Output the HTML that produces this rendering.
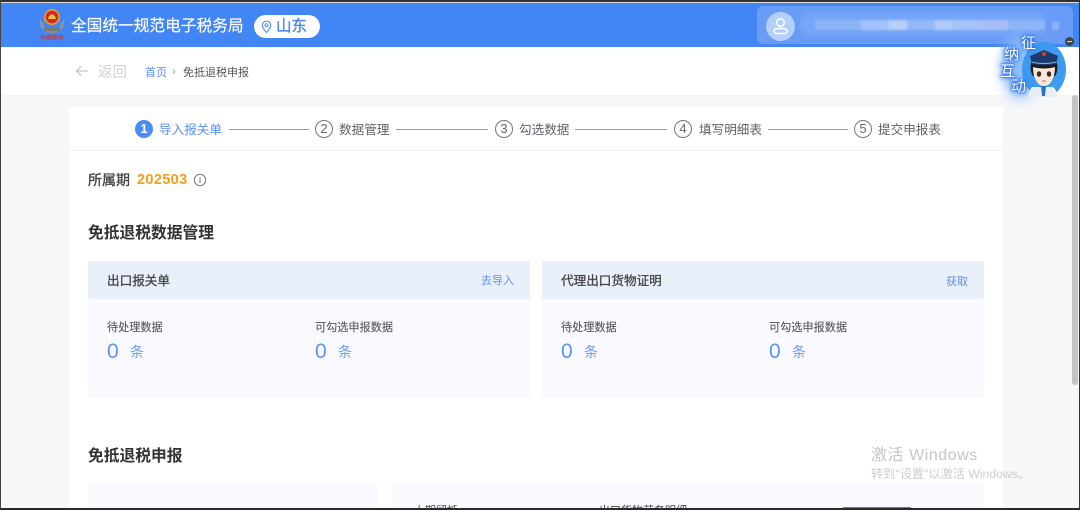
<!DOCTYPE html>
<html lang="zh-CN"><head><meta charset="utf-8"><title>免抵退税申报</title>
<style>
*{box-sizing:border-box;margin:0;padding:0}
html,body{width:1080px;height:510px;overflow:hidden;background:#f6f7f9}
body{position:relative;font-family:"Liberation Sans","Noto Sans CJK SC",sans-serif;color:#333;filter:blur(.35px)}
.a{position:absolute;white-space:nowrap;line-height:1}
.panel{position:absolute;background:#f8faff}
.ph{position:absolute;left:0;top:0;right:0;height:38px;background:#e9f0fb}
.line{position:absolute;top:129px;height:1px;background:#9a9a9a}
.num{position:absolute;top:120px;width:18px;height:18px;border:1px solid #777;border-radius:50%;color:#666;font-size:13px;line-height:16px;text-align:center}
.step{position:absolute;top:123px;font-size:12.6px;line-height:15px;color:#606266;white-space:nowrap}
.blue{color:#5b8ff5}
.lbl{font-size:11.15px;color:#555;-webkit-text-stroke:.1px #555}
.zero{font-size:21px;color:#5f93f6}
.tiao{font-size:14px;color:#6f9cf2}
.ptitle{font-size:12.6px;color:#444;line-height:16px;-webkit-text-stroke:.3px #444}
.m{font-size:15px;color:#fff;line-height:16px;text-shadow:0 0 1px #1f66e6,0 0 2px #1f66e6,0 0 3px #2f74ea,0 0 4px #2f74ea,0 0 6px #4a8cf5}
</style></head><body>
<!-- header -->
<div class="a" style="left:0;top:3px;width:1080px;height:44px;background:#4285f4"></div>
<svg class="a" style="left:38px;top:8px" width="28" height="36" viewBox="0 0 28 36">
<path d="M2 11c0 8 4 14 12 14s12-6 12-14l-3 9-9 3-9-3z" fill="#a5a7a2"/>
<path d="M4 14c1 6 4 10 10 10s9-4 10-10" fill="none" stroke="#8d908c" stroke-width="2"/>
<circle cx="14" cy="9" r="8" fill="#e0a22b"/><circle cx="14" cy="9" r="6.300" fill="#d5242b"/>
<path d="M10 11h8l-1-3-3-2-3 2z" fill="#f0c23a"/>
<rect x="6" y="19" width="16" height="4" rx="1" fill="#777a76"/>
<text x="14" y="31.500" font-size="5.500" text-anchor="middle" fill="#d5322e" font-family="Noto Sans CJK SC,sans-serif" font-weight="700" letter-spacing=".4">中国税务</text>
</svg>
<div class="a" style="left:71px;top:18px;font-size:15.7px;color:#fff;line-height:18px;-webkit-text-stroke:.15px #fff">全国统一规范电子税务局</div>
<div class="a" style="left:254px;top:15px;width:66px;height:23px;background:#fff;border-radius:12px"></div>
<svg class="a" style="left:261px;top:20px" width="11" height="14" viewBox="0 0 11 14"><path d="M5.500 1.200C3 1.200 1.300 3 1.300 5.300c0 2.800 4.200 7.200 4.200 7.200s4.200-4.400 4.200-7.200c0-2.300-1.700-4.100-4.200-4.100z" fill="none" stroke="#5b8ff5" stroke-width="1.200"/><circle cx="5.500" cy="5.300" r="1.500" fill="none" stroke="#5b8ff5"/></svg>
<div class="a" style="left:276px;top:18px;font-size:15.5px;color:#4a86f0;line-height:17px;-webkit-text-stroke:.35px #4a86f0">山东</div>
<!-- user box -->
<div class="a" style="left:757px;top:6px;width:316px;height:38px;background:#689cf7;border-radius:6px"></div>
<div class="a" style="left:766px;top:12px;width:29px;height:29px;border-radius:50%;background:#b3d0fb"></div>
<svg class="a" style="left:772px;top:17px" width="17" height="18" viewBox="0 0 17 18"><circle cx="8.500" cy="5.500" r="3.800" fill="none" stroke="#fff" stroke-width="1.500"/><rect x="2" y="11.500" width="13" height="5" rx="2.500" fill="none" stroke="#fff" stroke-width="1.500"/></svg>
<div class="a" style="left:800px;top:13px;width:245px;height:22px;background:#77a6f8;border-radius:9px;filter:blur(3px)"></div>
<div class="a" style="left:815px;top:20px;width:230px;height:10px;filter:blur(1px);background:linear-gradient(90deg,#8db4f8 0 20%,#a3c1fa 20% 32%,#b8cffa 32% 40%,#94b8f8 40% 52%,#b0caf9 52% 60%,#a6c3fa 60% 72%,#a9bef9 72% 84%,#8fb5f8 84%)"></div>
<div class="a" style="left:1052px;top:22px;width:7px;height:8px;background:#8fb5f8;filter:blur(1px)"></div>
<!-- breadcrumb row -->
<div class="a" style="left:0;top:47px;width:1080px;height:48px;background:#fff"></div>
<svg class="a" style="left:75px;top:65px" width="14" height="12" viewBox="0 0 14 12"><path d="M13 6H1.500M6 1.500 1.500 6 6 10.500" fill="none" stroke="#c4c6ca" stroke-width="1.300"/></svg>
<div class="a" style="left:98px;top:65px;font-size:14.500px;color:#cfd1d4;line-height:16px">返回</div>
<div class="a blue" style="left:145px;top:67px;font-size:11px;line-height:13px">首页</div>
<div class="a" style="left:172px;top:66px;font-size:11px;color:#999;line-height:13px">›</div>
<div class="a" style="left:183px;top:67px;font-size:11px;color:#555;line-height:13px">免抵退税申报</div>
<!-- main card -->
<div class="a" style="left:69px;top:107px;width:934px;height:403px;background:#fff"></div>
<div class="a" style="left:69px;top:150px;width:934px;height:1px;background:#eef0f3"></div>
<!-- steps -->
<div class="num" style="left:135px;background:#4a8cf5;border-color:#4a8cf5;color:#fff;font-weight:700">1</div>
<div class="step blue" style="left:159px">导入报关单</div>
<div class="line" style="left:229px;width:80px"></div>
<div class="num" style="left:315px">2</div>
<div class="step" style="left:339px">数据管理</div>
<div class="line" style="left:396px;width:92px"></div>
<div class="num" style="left:495px">3</div>
<div class="step" style="left:519px">勾选数据</div>
<div class="line" style="left:575px;width:92px"></div>
<div class="num" style="left:674px">4</div>
<div class="step" style="left:699px">填写明细表</div>
<div class="line" style="left:768px;width:80px"></div>
<div class="num" style="left:854px">5</div>
<div class="step" style="left:878px">提交申报表</div>
<!-- period -->
<div class="a" style="left:88px;top:172px;font-size:14px;color:#444;line-height:16px;-webkit-text-stroke:.35px #444">所属期</div>
<div class="a" style="left:137px;top:172px;font-size:14.500px;font-weight:700;letter-spacing:.35px;color:#f89c1c;line-height:16px">202503</div>
<svg class="a" style="left:193px;top:173px" width="14" height="14" viewBox="0 0 14 14"><circle cx="7" cy="7" r="5.700" fill="none" stroke="#777"/><path d="M7 6v4M7 4v1.200" stroke="#777" stroke-width="1.100"/></svg>
<div class="a" style="left:88px;top:225px;font-size:15.750px;font-weight:700;color:#333;line-height:18px">免抵退税数据管理</div>
<!-- panels -->
<div class="panel" style="left:88px;top:261px;width:442px;height:137px"><div class="ph"></div></div>
<div class="panel" style="left:542px;top:261px;width:442px;height:137px"><div class="ph"></div></div>
<div class="a ptitle" style="left:107px;top:273px">出口报关单</div>
<div class="a blue" style="left:481px;top:275px;font-size:11px;line-height:13px">去导入</div>
<div class="a lbl" style="left:107px;top:322px;line-height:13px">待处理数据</div>
<div class="a lbl" style="left:315px;top:322px;line-height:13px">可勾选申报数据</div>
<div class="a zero" style="left:107px;top:341px">0</div>
<div class="a tiao" style="left:130px;top:345px">条</div>
<div class="a zero" style="left:315px;top:341px">0</div>
<div class="a tiao" style="left:338px;top:345px">条</div>
<div class="a ptitle" style="left:561px;top:273px">代理出口货物证明</div>
<div class="a blue" style="left:946px;top:276px;font-size:11px;line-height:13px">获取</div>
<div class="a lbl" style="left:561px;top:322px;line-height:13px">待处理数据</div>
<div class="a lbl" style="left:769px;top:322px;line-height:13px">可勾选申报数据</div>
<div class="a zero" style="left:561px;top:341px">0</div>
<div class="a tiao" style="left:584px;top:345px">条</div>
<div class="a zero" style="left:769px;top:341px">0</div>
<div class="a tiao" style="left:792px;top:345px">条</div>
<!-- second section -->
<div class="a" style="left:88px;top:448px;font-size:15.750px;font-weight:700;color:#333;line-height:18px">免抵退税申报</div>
<div class="panel" style="left:88px;top:484px;width:290px;height:26px"></div>
<div class="panel" style="left:391px;top:484px;width:593px;height:26px"></div>
<div class="a" style="left:414px;top:505px;font-size:11px;color:#444;line-height:13px">上期留抵</div>
<div class="a" style="left:599px;top:505px;font-size:11px;color:#444;line-height:13px">出口货物劳务明细</div>
<div class="a" style="left:843px;top:507px;width:68px;height:1px;background:#4a7fd8"></div>
<!-- activation watermark -->
<div class="a" style="left:871px;top:447px;font-size:16px;letter-spacing:.55px;color:#c6c6c6;line-height:18px">激活 Windows</div>
<div class="a" style="left:871px;top:467px;font-size:12.200px;color:#cdcdcd;line-height:14px">转到"设置"以激活 Windows。</div>
<!-- scrollbar -->
<div class="a" style="left:1072px;top:95px;width:6px;height:290px;background:#c4c4c4;border-radius:3px"></div>
<!-- mascot -->
<div class="a" style="left:1002px;top:36px;width:36px;height:62px;background:#8fc0f8;border-radius:50%;filter:blur(6px)"></div>
<div class="a" style="left:1022px;top:42px;width:44px;height:55px;border-radius:50%;background:#3c9bef"></div>
<svg class="a" style="left:1025px;top:48px" width="40" height="50" viewBox="0 0 40 50">
<path d="M7 39c-2 2-3 6-3 10h28c0-4-1-8-4-10z" fill="#e9eef5"/>
<path d="M16 38h5l-1 10h-3z" fill="#2a6fcf"/>
<path d="M6 15c-1 6 0 10 2 13h22c2-3 3-7 2-13z" fill="#1f1a1a"/>
<path d="M8 19c0 10 4 19 11 19s11-9 11-19c-6 2-16 2-22 0z" fill="#fbe6d8"/>
<path d="M5 8 19 2l14 6-2 8c-7 2-17 2-24 0z" fill="#1c3a6e"/>
<path d="M7 14c7 2 17 2 24 0" fill="none" stroke="#8fb0de" stroke-width="1"/>
<circle cx="19" cy="6" r="2" fill="#d5422b"/>
<ellipse cx="14" cy="26" rx="2.200" ry="2.800" fill="#3a2a25"/><ellipse cx="24" cy="26" rx="2.200" ry="2.800" fill="#3a2a25"/>
<path d="M17 33h4" stroke="#c47a6a"/>
</svg>
<div class="a m" style="left:1021px;top:36px">征</div>
<div class="a m" style="left:1004px;top:47px">纳</div>
<div class="a m" style="left:1000px;top:64px">互</div>
<div class="a m" style="left:1011px;top:79px">动</div>
<div class="a" style="left:1065px;top:37px;width:9px;height:9px;border-radius:50%;background:#444"></div>
<div class="a" style="left:1067px;top:41px;width:5px;height:1px;background:#ddd"></div>
<!-- screenshot frame -->
<div class="a" style="left:0;top:0;width:1080px;height:2px;background:#333"></div>
<div class="a" style="left:0;top:2px;width:1080px;height:1px;background:#ddd"></div>
<div class="a" style="left:0;top:0;width:1px;height:510px;background:#444"></div>
<div class="a" style="left:1079px;top:0;width:1px;height:510px;background:#333"></div>
<div class="a" style="left:0;top:508px;width:1080px;height:2px;background:#2a2a2a"></div>
</body></html>
